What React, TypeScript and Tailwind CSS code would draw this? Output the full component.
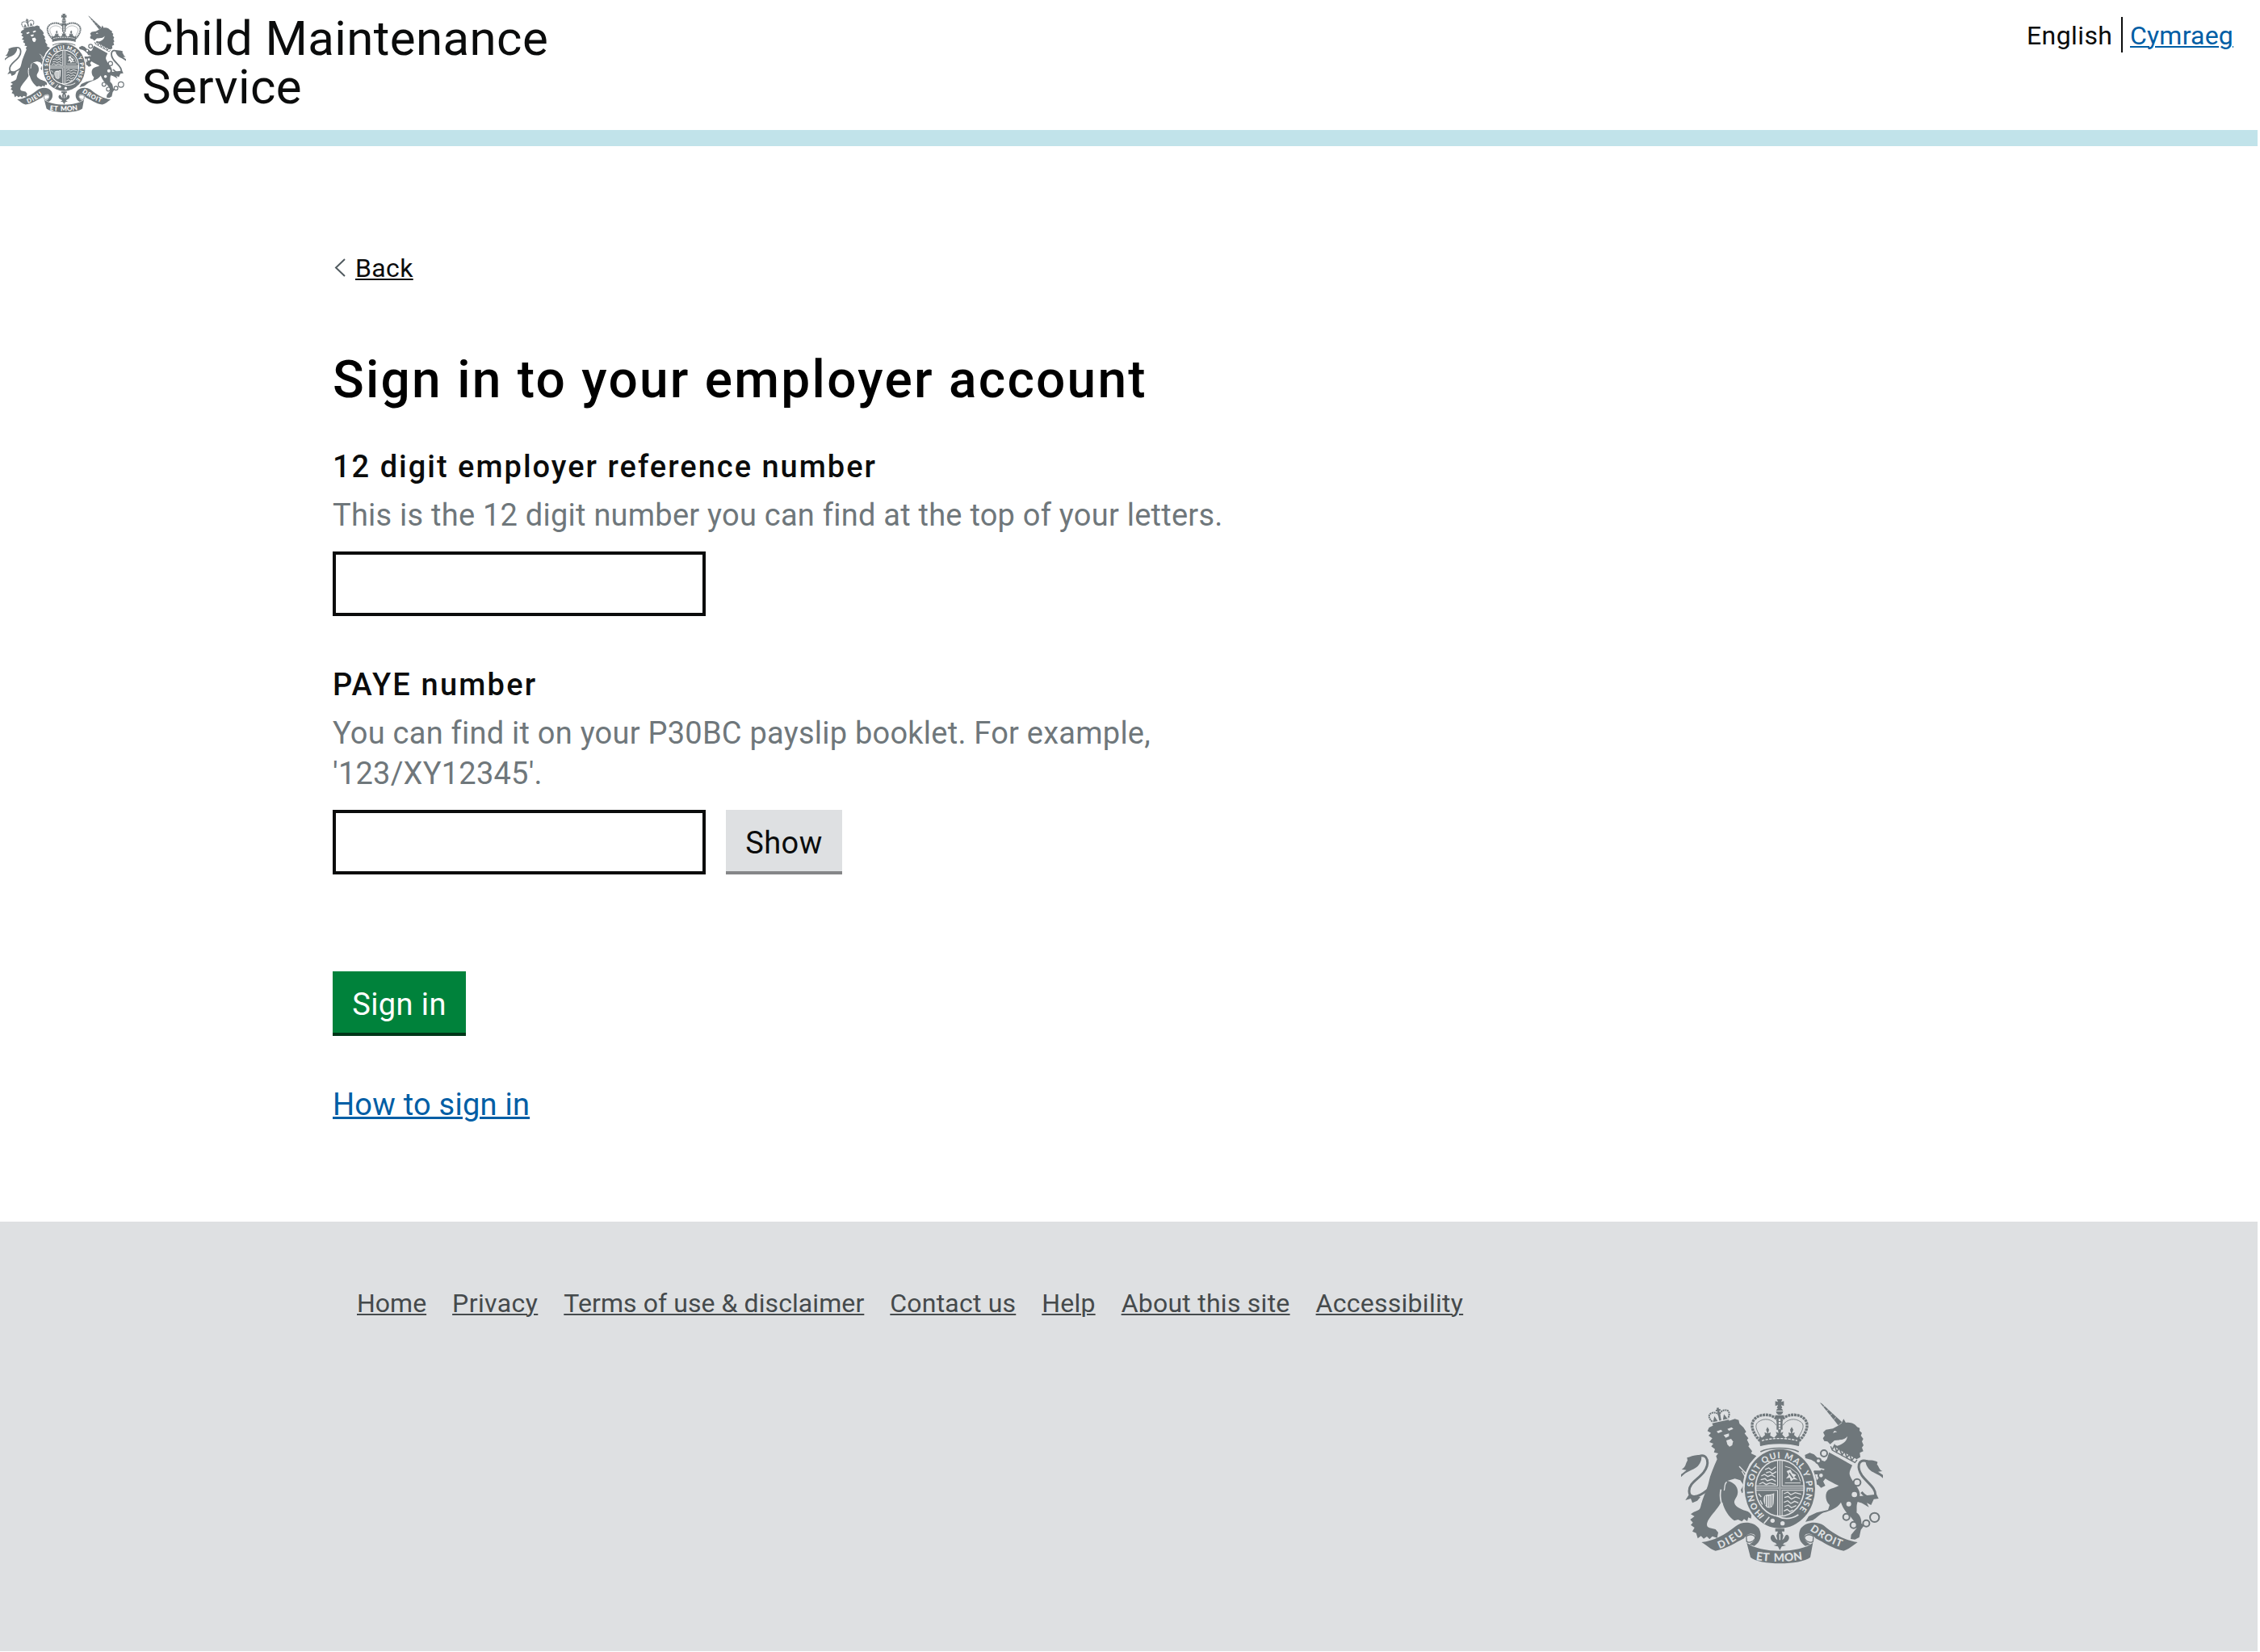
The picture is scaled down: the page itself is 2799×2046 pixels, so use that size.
type EmblemProps = { className: string; paper: string; id: string };

function Lion({ paper }: { paper: string }) {
  return (
    <g>
      {/* tail */}
      <path d="M104 250C136 240 144 278 120 310C98 338 66 350 66 380C66 406 92 410 134 376" fill="none" stroke="currentColor" strokeWidth="9" />
      <path d="M36 328V318C44 312 48 308 56 302L38 299C54 292 52 278 60 266L58 256C72 252 90 242 110 247C116 262 106 282 94 291C80 303 58 304 36 328Z" />
      <path d="M66 392L52 414L72 408L78 424L96 416L108 402Z" />
      {/* body, head and legs */}
      <path d="M140 144L160 134L200 124L236 112L250 116L253 130L268 144L278 160L272 166L286 184L281 190L290 208L286 214L300 232L296 240L316 250L290 280L278 312L300 340L304 366L290 392L282 386L276 396L268 384L262 388L258 376L268 358L256 340L236 334L208 342C236 348 250 368 246 390C244 404 232 412 234 424C238 440 262 450 284 456L298 466L296 482L286 478L282 492L270 484L262 493L248 486L234 490C214 476 196 450 190 422L182 426C172 446 150 466 136 490C130 504 130 512 142 517L164 522L174 534L170 554L152 548L142 559L132 549L120 557L110 547L98 556L92 536L78 530L86 516L72 506L80 497L70 486L86 474L72 466C86 452 104 456 108 440C118 400 132 375 138 350C144 320 158 290 170 262L166 250L174 240L158 236L162 224L148 214L156 204L141 198L152 184L138 174L147 164L134 157Z" />
      <path d="M184 374C178 400 184 414 186 426" fill="none" stroke={paper} strokeWidth="5" />
      <path d="M196 378C200 362 196 352 206 346" fill="none" stroke={paper} strokeWidth="4" />
      <path d="M252 288L300 338M262 306L276 330" fill="none" stroke={paper} strokeWidth="4" />
      {/* face */}
      <g fill={paper}>
        <path d="M168 158L184 152L190 158L174 165Z" />
        <path d="M208 149L224 143L230 149L214 156Z" />
        <path d="M194 172L214 166L214 176L202 182Z" />
        <path d="M204 192L222 186L229 196L226 210L216 215L208 207Z" />
      </g>
      {/* small crown */}
      <g transform="rotate(-12 178 100)">
        <g fill="none" stroke="currentColor" strokeWidth="6" strokeDasharray="6 2">
          <path d="M148 116C134 98 140 84 156 84C168 84 176 92 178 100C180 92 188 84 200 84C216 84 222 98 208 116" />
        </g>
        <path d="M146 122L210 122L208 133L148 133ZM150 118L160 98L168 118ZM188 118L196 98L206 118ZM174 70H182V76H187V82H182V118H174V82H169V76H174Z" />
      </g>
    </g>
  );
}

function Unicorn({ paper }: { paper: string }) {
  return (
    <g>
      {/* tail */}
      <path d="M728 270C690 256 690 296 708 322C730 352 758 366 758 394C756 412 728 410 706 384" fill="none" stroke="currentColor" strokeWidth="9" />
      <path d="M786 332V320L768 308L784 306C770 300 772 288 764 282L766 272C750 264 738 266 722 265C720 278 728 294 740 304C752 314 768 316 786 332Z" />
      <path d="M762 392L770 408L752 410L742 432L726 424L734 440L710 426L694 400Z" />
      {/* horn */}
      <path d="M552 52L558 54L634 124L620 136Z" />
      <path d="M562 68L570 64M574 84L584 78M588 100L598 92M602 116L612 106" stroke={paper} strokeWidth="2" />
      {/* head and mane */}
      <path d="M618 138L632 128L640 112L648 126C668 122 684 132 690 142L700 146L699 156L708 164L704 174L713 186L708 196L714 210L708 218L713 232L700 238L702 254L688 262L640 236L604 214L612 204L632 190L606 192L590 206L580 196L568 194L563 184L570 174L564 162L574 152L600 148Z" />
      <path d="M616 160L606 156L600 164Z" fill={paper} />
      <path d="M604 206L616 212C636 206 652 196 654 176C646 188 634 188 626 190Z" fill={paper} />
      {/* collar */}
      <path d="M590 212L692 264L684 280L590 232Z" fill={paper} />
      <path d="M592 214L598 228L682 274L690 264" fill="none" stroke="currentColor" strokeWidth="4" />
      <path d="M598 226L606 210L614 234L624 220L634 246L644 232L652 256L662 243L670 266L680 254" fill="none" stroke="currentColor" strokeWidth="5" />
      {/* body and legs */}
      <path d="M586 236L672 284C666 300 658 310 664 324C674 350 704 372 700 398L712 426L692 420C686 436 690 448 688 460C702 470 706 484 706 500L716 508L704 524L698 552L682 560L666 558L668 542L688 518C686 500 672 480 652 462C640 446 634 434 630 422C616 444 592 452 566 460C548 468 540 480 526 488L498 494L510 474L540 460L582 450L588 432C570 416 570 386 584 376C596 368 610 368 622 360C602 352 590 344 572 334L564 344L572 360L556 368L546 358L524 350L516 326L530 304L556 304L548 288L540 276L520 264L498 258L496 246L514 238L530 244L548 262L570 270L578 262Z" />
      <path d="M534 318L540 340L560 318Z" fill={paper} />
      <path d="M546 296L568 300" stroke={paper} strokeWidth="5" />
      {/* chain */}
      <g fill={paper} stroke="currentColor" strokeWidth="6">
        <circle cx="567" cy="240" r="12" />
        <circle cx="546" cy="268" r="9" />
        <circle cx="556" cy="322" r="10" />
        <circle cx="690" cy="348" r="13" />
        <circle cx="650" cy="476" r="12" />
        <circle cx="677" cy="506" r="12" />
        <circle cx="724" cy="500" r="12" />
        <circle cx="755" cy="478" r="17" />
      </g>
      <circle cx="680" cy="393" r="10" fill={paper} />
      <circle cx="659" cy="428" r="9" fill={paper} />
    </g>
  );
}

function Crown({ paper }: { paper: string }) {
  return (
    <g>
      <path d="M392 39H412L408 49L418 46V64L408 60L412 72H392L396 60L386 64V46L396 49Z" />
      <circle cx="402" cy="84" r="13" />
      <path d="M388 83H416" stroke={paper} strokeWidth="3" />
      <g fill="none" stroke="currentColor">
        <path d="M330 194C304 168 290 134 308 114C330 88 382 92 398 122" strokeWidth="10" strokeDasharray="9 2.5" />
        <path d="M474 194C500 168 514 134 496 114C474 88 422 92 406 122" strokeWidth="10" strokeDasharray="9 2.5" />
        <path d="M338 188C318 160 306 136 322 124C344 106 376 112 390 136" strokeWidth="2.5" />
        <path d="M466 188C486 160 498 136 482 124C460 106 428 112 414 136" strokeWidth="2.5" />
      </g>
      <path d="M386 98H418V110H413V152H391V110H386Z" />
      <path d="M402 112V150" stroke={paper} strokeWidth="7" strokeDasharray="8 3" />
      {/* crosses and fleurs on the rim */}
      <path d="M326 176L336 182L348 172L346 162L357 166L352 152L357 142L363 152L359 166L369 162L367 174L382 182L392 170L388 160L398 164L396 152H408L406 164L416 160L412 170L424 182L437 174L435 162L445 166L441 152L447 142L453 152L448 166L458 162L456 172L468 182L478 176L474 212C440 198 364 198 330 212Z" />
      <path d="M336 193C370 182 434 182 468 193" fill="none" stroke={paper} strokeWidth="4" strokeDasharray="10 4" />
      <path d="M328 214C366 200 438 200 476 214L474 238C438 216 366 216 330 238Z" fill={paper} />
      <path d="M330 211C364 199 440 199 474 211" fill="none" stroke="currentColor" strokeWidth="5" />
      <path d="M331 234C364 216 440 216 473 234" fill="none" stroke="currentColor" strokeWidth="5" />
    </g>
  );
}

function Shield({ paper, id }: { paper: string; id: string }) {
  return (
    <g>
      <ellipse cx="403" cy="371" rx="138" ry="154" fill={paper} />
      <ellipse cx="403" cy="371" rx="131" ry="147" />
      <ellipse cx="403" cy="369" rx="93" ry="107" fill={paper} />
      <ellipse cx="403" cy="369" rx="88" ry="102" />
      {/* garter motto */}
      <path id={`${id}-garter`} d="M344 467A99 113 0 0 1 304 371A99 113 0 0 1 502 371A99 113 0 0 1 450 471" fill="none" />
      <text fill={paper} fontSize="32" fontWeight="900" textLength="520" className="font-[Lato]">
        <textPath href={`#${id}-garter`} startOffset="4">HONI SOIT QUI MAL Y PENSE</textPath>
      </text>
      {/* buckle */}
      <path d="M326 482L344 468M344 500L364 476" stroke={paper} strokeWidth="5" />
      <circle cx="376" cy="490" r="8" fill={paper} />
      <circle cx="413" cy="500" r="8" fill={paper} />
      <path d="M390 472C420 488 450 482 472 468" fill="none" stroke={paper} strokeWidth="5" />
      {/* three lions */}
      <g fill="none" stroke={paper} strokeWidth="4">
        <path d="M348 300L362 294L372 302L388 290M352 312L366 308L376 316L390 308" />
        <path d="M334 324L346 318L358 326L372 320L386 328M332 338L348 334L356 342L374 336L388 344" />
        <path d="M326 354L340 348L352 356L366 350L388 356" />
        <path d="M418 390L432 384L444 394L460 386L482 392M420 404L434 400L446 410L462 402L478 408" />
        <path d="M418 422L432 416L444 426L458 418L472 424M420 438L434 432L446 442L464 434" />
        <path d="M418 454L430 448L440 456L452 450" />
      </g>
      {/* rampant lion */}
      <path d="M422 288L442 294L470 316L480 344M422 350L480 350" fill="none" stroke={paper} strokeWidth="3" />
      <path d="M428 306L442 300L450 314L464 320L456 328L470 338L454 336L444 344L440 330L426 334L436 320Z" fill={paper} />
      <path d="M438 312L446 324L452 332" fill="none" stroke="currentColor" strokeWidth="5" />
      {/* harp */}
      <path d="M344 402C350 388 362 398 382 388L380 424C378 440 368 446 354 440C346 430 340 416 344 402Z" fill={paper} />
      <path d="M350 398V432M358 398V438M366 397V440M374 394V436" stroke="currentColor" strokeWidth="3" />
      <path d="M324 390L334 402M330 414L338 430" stroke={paper} strokeWidth="4" />
      {/* cross */}
      <path d="M403 266V472M314 369H492" stroke={paper} strokeWidth="20" />
      <path d="M403 268V470M316 369H490" stroke="currentColor" strokeWidth="14" />
      <path d="M403 268V470M316 369H490" stroke={paper} strokeWidth="8" opacity="0.45" />
    </g>
  );
}

function Scroll({ paper, id }: { paper: string; id: string }) {
  return (
    <g>
      <path d="M112 570C156 566 200 542 240 510C262 492 306 492 326 520C338 546 330 572 308 584L290 578C312 566 318 550 306 540C292 534 276 544 270 556C240 570 204 596 164 602C144 596 132 582 112 570Z" />
      <path d="M692 570C650 566 606 542 566 508C544 492 500 492 480 520C468 546 476 572 498 584L516 578C494 566 488 550 500 540C514 534 530 544 536 556C566 570 600 596 640 602C660 596 674 582 692 570Z" />
      <path d="M278 548C296 536 316 546 310 558C304 568 290 574 280 568Z" fill={paper} stroke="currentColor" strokeWidth="4" />
      <path d="M528 548C510 536 490 546 496 558C502 568 516 574 526 568Z" fill={paper} stroke="currentColor" strokeWidth="4" />
      <path d="M280 572C330 612 476 612 526 572L516 626C480 656 326 656 294 626Z" />
      <g fill={paper} fontWeight="900" className="font-[Lato]">
        <path id={`${id}-dieu`} d="M178 594C214 582 252 556 284 528" fill="none" />
        <text fontSize="38" textLength="106"><textPath href={`#${id}-dieu`}>DIEU</textPath></text>
        <path id={`${id}-mon`} d="M314 636C364 644 440 644 496 633" fill="none" />
        <text fontSize="42" textLength="174" wordSpacing="8"><textPath href={`#${id}-mon`}>ET MON</textPath></text>
        <path id={`${id}-droit`} d="M514 526C550 550 592 580 650 594" fill="none" />
        <text fontSize="38" textLength="132"><textPath href={`#${id}-droit`}>DROIT</textPath></text>
      </g>
      {/* fleur-de-lis */}
      <path d="M386 520H420V530H410L416 546L412 562C424 554 420 542 430 542C442 546 440 568 420 572L414 578L426 582L410 586L403 600L396 586L380 582L392 578L386 572C366 568 364 546 376 542C386 542 382 554 394 562L390 546L396 530H386Z" />
      <path d="M403 540V562" stroke={paper} strokeWidth="4" />
    </g>
  );
}

function Emblem({ className, paper, id }: EmblemProps) {
  return (
    <svg viewBox="36 39 750 612" className={className} fill="currentColor" aria-hidden="true">
      <Lion paper={paper} />
      <Unicorn paper={paper} />
      <Shield paper={paper} id={id} />
      <Crown paper={paper} />
      <Scroll paper={paper} id={id} />
    </svg>
  );
}

const footerLinks = [
  { label: "Home", tracking: "" },
  { label: "Privacy", tracking: "tracking-[0.4px]" },
  { label: "Terms of use & disclaimer", tracking: "tracking-[0.08px]" },
  { label: "Contact us", tracking: "tracking-[0.2px]" },
  { label: "Help", tracking: "tracking-[0.2px]" },
  { label: "About this site", tracking: "tracking-[0.25px]" },
  { label: "Accessibility", tracking: "tracking-[0.27px]" },
];

const linkClass = "underline decoration-2 underline-offset-2";

function Header() {
  return (
    <header className="flex h-[181px] items-start border-b-[20px] border-[#c1e3ea]">
      <Emblem id="header" paper="#ffffff" className="mt-[17px] ml-[6px] h-[122.4px] w-[150px] text-[#6f777b]" />
      <p className="mt-[18px] ml-5 w-[560px] text-[60px] leading-[60px] tracking-[0.4px]">
        Child Maintenance
        <br />
        Service
      </p>
      <div className="mt-[21px] mr-[30px] ml-auto flex text-[32px] leading-[46px] whitespace-nowrap">
        <span className="h-[44px] w-[119px] border-r-2 border-[#0b0c0c] tracking-[0.4px]">English</span>
        <a href="#" className={`ml-[9px] w-[128px] tracking-[0.2px] text-[#005ea5] ${linkClass}`}>
          Cymraeg
        </a>
      </div>
    </header>
  );
}

function SignInForm() {
  return (
    <form className="w-[1130px] text-[38px] leading-[50px] tracking-[0.24px]" onSubmit={(e) => e.preventDefault()}>
      <label htmlFor="reference" className="block">
        <span className="block font-medium tracking-[2px]">12 digit employer reference number</span>
        <span className="mt-[10px] block whitespace-nowrap text-[#6f777b]">
          This is the 12 digit number you can find at the top of your letters.
        </span>
      </label>
      <input id="reference" className="mt-5 block h-20 w-[462px] border-4 border-[#0b0c0c] bg-white px-2" />

      <label htmlFor="paye" className="mt-[60px] block">
        <span className="block font-medium tracking-[2.2px]">PAYE number</span>
        <span className="mt-[10px] block whitespace-nowrap text-[#6f777b]">
          You can find it on your P30BC payslip booklet. For example,
          <br />
          '123/XY12345'.
        </span>
      </label>
      <div className="mt-5 flex gap-[25px]">
        <input id="paye" className="block h-20 w-[462px] border-4 border-[#0b0c0c] bg-white px-2" />
        <button type="button" className="flex h-20 w-[144px] items-start justify-center border-b-4 border-[#858688] bg-[#dee0e2] pt-4 tracking-[0.4px]">
          Show
        </button>
      </div>

      <button type="submit" className="mt-[120px] flex h-20 w-[165px] items-start justify-center border-b-4 border-[#003618] bg-[#00823b] pt-4 tracking-[0.4px] text-white">
        Sign in
      </button>
      <a href="#" className="mt-[60px] inline-block align-top text-[#005ea5] underline decoration-[2.5px] underline-offset-2">
        How to sign in
      </a>
    </form>
  );
}

function Footer() {
  return (
    <footer className="h-[532px] bg-[#dee0e2] pt-[81px] text-[#454a4c]">
      <nav className="ml-[442px] flex gap-8 text-[32px] leading-10">
        {footerLinks.map(({ label, tracking }) => (
          <a key={label} href="#" className={`whitespace-nowrap ${tracking} ${linkClass}`}>
            {label}
          </a>
        ))}
      </nav>
      <Emblem id="footer" paper="#dee0e2" className="mt-[99px] ml-[2082px] h-[204px] w-[250px] text-[#6f777b]" />
    </footer>
  );
}

export default function App() {
  return (
    <div className="min-h-[2046px] bg-white">
      <div className="w-[2796px] font-[Roboto,sans-serif] text-[#0b0c0c]">
        <Header />
        <main className="h-[1332px] pt-[131px] pl-[412px]">
          <a href="#" className="flex items-center text-[32px] leading-10">
            <svg viewBox="0 0 16 24" className="-mt-[2px] h-6 w-4" fill="none" stroke="#505a5f" strokeWidth="2">
              <path d="M15 2L4 12.5L15 23" />
            </svg>
            <span className={`ml-3 tracking-[0.35px] ${linkClass}`}>Back</span>
          </a>
          <h1 className="mt-[84px] mb-[47px] text-[64px] leading-[70px] font-medium tracking-[2.25px] text-black">
            Sign in to your employer account
          </h1>
          <SignInForm />
        </main>
        <Footer />
      </div>
    </div>
  );
}
